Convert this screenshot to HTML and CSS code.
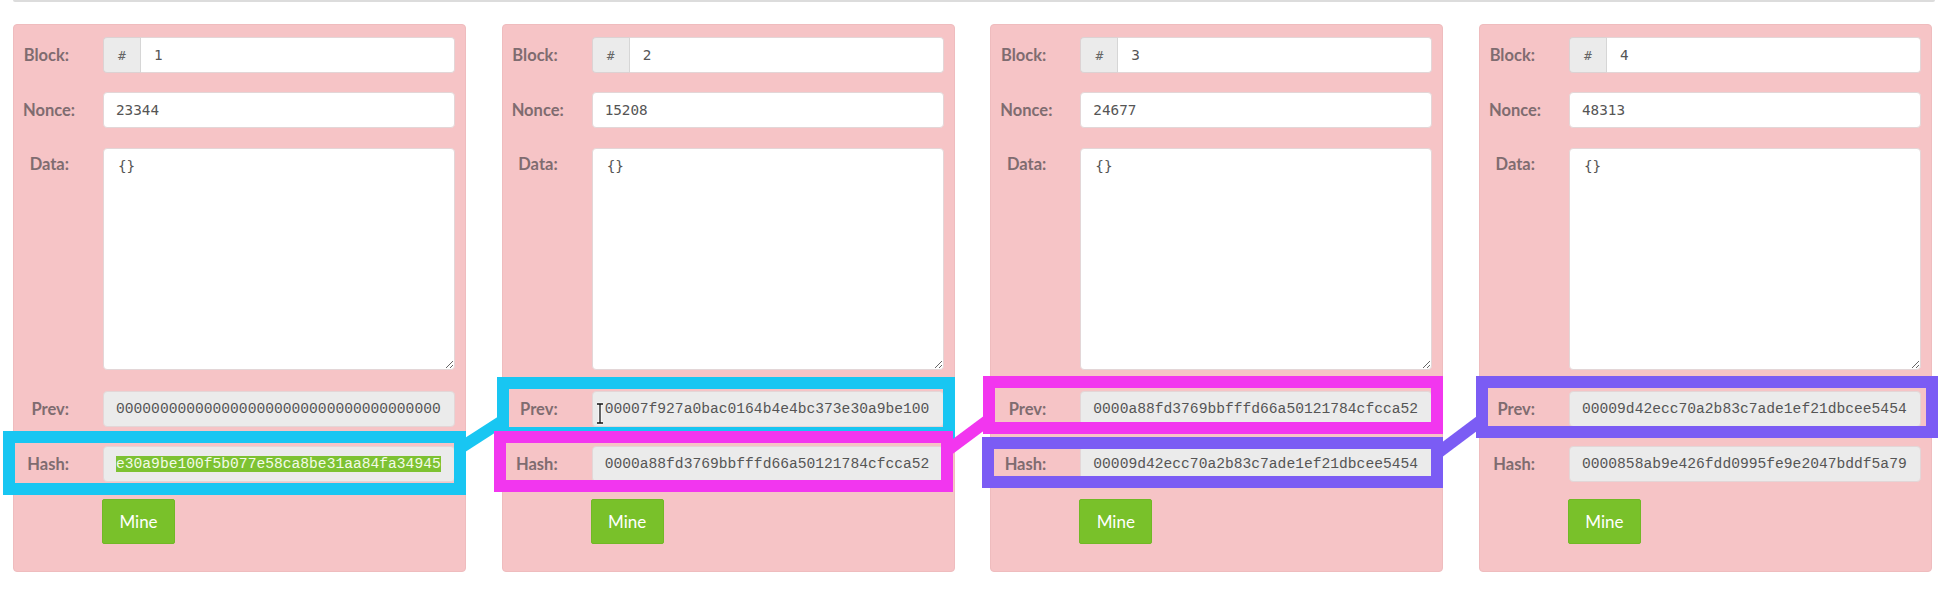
FILE: index.html
```html
<!DOCTYPE html>
<html lang="en">
<head>
<meta charset="utf-8">
<title>Blockchain</title>
<link rel="stylesheet" href="styles.css">
</head>
<body>
<div class="page">
  <div class="topbar"></div>
  <div class="chain">
    <div class="card">
      <div class="row row-block"><label class="lbl">Block:</label><div class="group"><span class="addon">#</span><span class="field num joined">1</span></div></div>
      <div class="row row-nonce"><label class="lbl">Nonce:</label><span class="field num">23344</span></div>
      <div class="row row-data"><label class="lbl lbl-top">Data:</label><textarea class="data" readonly>{}</textarea></div>
      <div class="row row-prev"><label class="lbl">Prev:</label><span class="field ro">0000000000000000000000000000000000000</span></div>
      <div class="row row-hash"><label class="lbl">Hash:</label><span class="field ro"><span class="sel">e30a9be100f5b077e58ca8be31aa84fa34945</span></span></div>
      <div class="row row-mine"><button class="mine">Mine</button></div>
    </div>
    <div class="card">
      <div class="row row-block"><label class="lbl">Block:</label><div class="group"><span class="addon">#</span><span class="field num joined">2</span></div></div>
      <div class="row row-nonce"><label class="lbl">Nonce:</label><span class="field num">15208</span></div>
      <div class="row row-data"><label class="lbl lbl-top">Data:</label><textarea class="data" readonly>{}</textarea></div>
      <div class="row row-prev"><label class="lbl">Prev:</label><span class="field ro">00007f927a0bac0164b4e4bc373e30a9be100</span></div>
      <div class="row row-hash"><label class="lbl">Hash:</label><span class="field ro">0000a88fd3769bbfffd66a50121784cfcca52</span></div>
      <div class="row row-mine"><button class="mine">Mine</button></div>
    </div>
    <div class="card">
      <div class="row row-block"><label class="lbl">Block:</label><div class="group"><span class="addon">#</span><span class="field num joined">3</span></div></div>
      <div class="row row-nonce"><label class="lbl">Nonce:</label><span class="field num">24677</span></div>
      <div class="row row-data"><label class="lbl lbl-top">Data:</label><textarea class="data" readonly>{}</textarea></div>
      <div class="row row-prev"><label class="lbl">Prev:</label><span class="field ro">0000a88fd3769bbfffd66a50121784cfcca52</span></div>
      <div class="row row-hash"><label class="lbl">Hash:</label><span class="field ro">00009d42ecc70a2b83c7ade1ef21dbcee5454</span></div>
      <div class="row row-mine"><button class="mine">Mine</button></div>
    </div>
    <div class="card">
      <div class="row row-block"><label class="lbl">Block:</label><div class="group"><span class="addon">#</span><span class="field num joined">4</span></div></div>
      <div class="row row-nonce"><label class="lbl">Nonce:</label><span class="field num">48313</span></div>
      <div class="row row-data"><label class="lbl lbl-top">Data:</label><textarea class="data" readonly>{}</textarea></div>
      <div class="row row-prev"><label class="lbl">Prev:</label><span class="field ro">00009d42ecc70a2b83c7ade1ef21dbcee5454</span></div>
      <div class="row row-hash"><label class="lbl">Hash:</label><span class="field ro">0000858ab9e426fdd0995fe9e2047bddf5a79</span></div>
      <div class="row row-mine"><button class="mine">Mine</button></div>
    </div>
  </div>
  <svg class="overlay" width="1948" height="593" viewBox="0 0 1948 593" xmlns="http://www.w3.org/2000/svg">
    <g fill="none" stroke-width="12">
      <line x1="458" y1="449.5" x2="505" y2="419.3" stroke="#18c6f2"/>
      <rect x="9" y="437" width="451" height="52" stroke="#18c6f2"/>
      <rect x="503" y="383" width="446" height="50" stroke="#18c6f2"/>
      <line x1="946" y1="451.5" x2="990" y2="418.8" stroke="#f236ef"/>
      <rect x="500" y="437" width="447" height="49" stroke="#f236ef"/>
      <rect x="989" y="382" width="448" height="46" stroke="#f236ef"/>
      <line x1="1437" y1="453.5" x2="1482" y2="419.8" stroke="#7b5cf4"/>
      <rect x="988" y="443" width="449" height="39" stroke="#7b5cf4"/>
      <rect x="1482" y="382" width="450" height="50" stroke="#7b5cf4"/>
    </g>
    <g class="ibeam">
      <path d="M597 404 h6 M600 404 v19 M597 423 h6" stroke="#fff" stroke-width="3" fill="none"/>
      <path d="M597 404 h6 M600 404 v19 M597 423 h6" stroke="#111" stroke-width="1.3" fill="none"/>
    </g>
  </svg>
</div>
</body>
</html>
```
FILE: styles.css
```css
html, body {
  margin: 0;
  padding: 0;
  background: #ffffff;
}

body {
  font-family: Lato, "Open Sans", sans-serif;
}

.page {
  position: relative;
  width: 1948px;
  height: 593px;
  overflow: hidden;
}

.topbar {
  margin: 0 13px;
  height: 2px;
  background: #dcdcdc;
  border-radius: 0 0 3px 3px;
}

.chain {
  display: flex;
  gap: 35.67px;
  padding: 22px 0 0 13px;
}

.card {
  width: 453px;
  height: 548px;
  box-sizing: border-box;
  background: #f6c4c6;
  border: 1px solid #efbcbe;
  border-radius: 4px;
  padding: 12px 10px 0 0;
  display: flex;
  flex-direction: column;
}

.row {
  display: flex;
  align-items: center;
}

.row-block { height: 36px; margin-bottom: 19px; }
.row-nonce { height: 36px; margin-bottom: 20px; }
.row-data  { height: 222px; margin-bottom: 21px; align-items: flex-start; }
.row-prev  { height: 36px; margin-bottom: 19px; }
.row-hash  { height: 36px; margin-bottom: 17px; }
.row-mine  { height: 45px; }

.lbl {
  flex: none;
  width: 89px;
  box-sizing: border-box;
  padding: 0 34px 0 9px;
  text-align: right;
  white-space: nowrap;
  font-family: Lato, "Open Sans", sans-serif;
  font-weight: 700;
  font-size: 16.5px;
  line-height: 20px;
  color: #7f6c70;
}

.lbl-top {
  padding-top: 6px;
}

.group {
  flex: 1;
  display: flex;
  height: 36px;
}

.addon {
  flex: none;
  width: 38px;
  box-sizing: border-box;
  height: 36px;
  display: flex;
  align-items: center;
  justify-content: center;
  background: #ebebeb;
  border: 1px solid #dcd2d3;
  border-right: 1px solid #d6d6d6;
  border-radius: 4px 0 0 4px;
  font-family: "DejaVu Sans Mono", monospace;
  font-size: 13px;
  color: #666;
}

.field {
  flex: 1;
  min-width: 0;
  height: 36px;
  box-sizing: border-box;
  display: flex;
  align-items: center;
  padding: 0 12px;
  background: #ffffff;
  border: 1px solid #e3d6d7;
  border-radius: 4px;
  overflow: hidden;
  white-space: nowrap;
  color: #555;
}

.field.num {
  font-family: "DejaVu Sans Mono", monospace;
  font-size: 14.3px;
}

.field.joined {
  border-left: 0;
  border-radius: 0 4px 4px 0;
  padding-left: 13px;
}

.field.ro {
  background: #ebebeb;
  font-family: "Liberation Mono", "Courier New", monospace;
  font-size: 14.64px;
  color: #555;
}

.sel {
  background: #7dc232;
  color: #f3fbe8;
}

.data {
  flex: 1;
  height: 222px;
  box-sizing: border-box;
  margin: 0;
  padding: 9px 14px;
  background: #ffffff;
  border: 1px solid #e3d6d7;
  border-radius: 4px;
  font-family: "DejaVu Sans Mono", monospace;
  font-size: 14.3px;
  color: #555;
  outline: none;
}

.mine {
  margin-left: 88px;
  width: 73px;
  height: 45px;
  box-sizing: border-box;
  background: #79c12a;
  border: 1px solid #71b826;
  border-radius: 2px;
  color: #ffffff;
  font-family: Lato, "Open Sans", sans-serif;
  font-size: 17px;
  padding: 0;
}

.overlay {
  position: absolute;
  top: 0;
  left: 0;
  pointer-events: none;
}
```
